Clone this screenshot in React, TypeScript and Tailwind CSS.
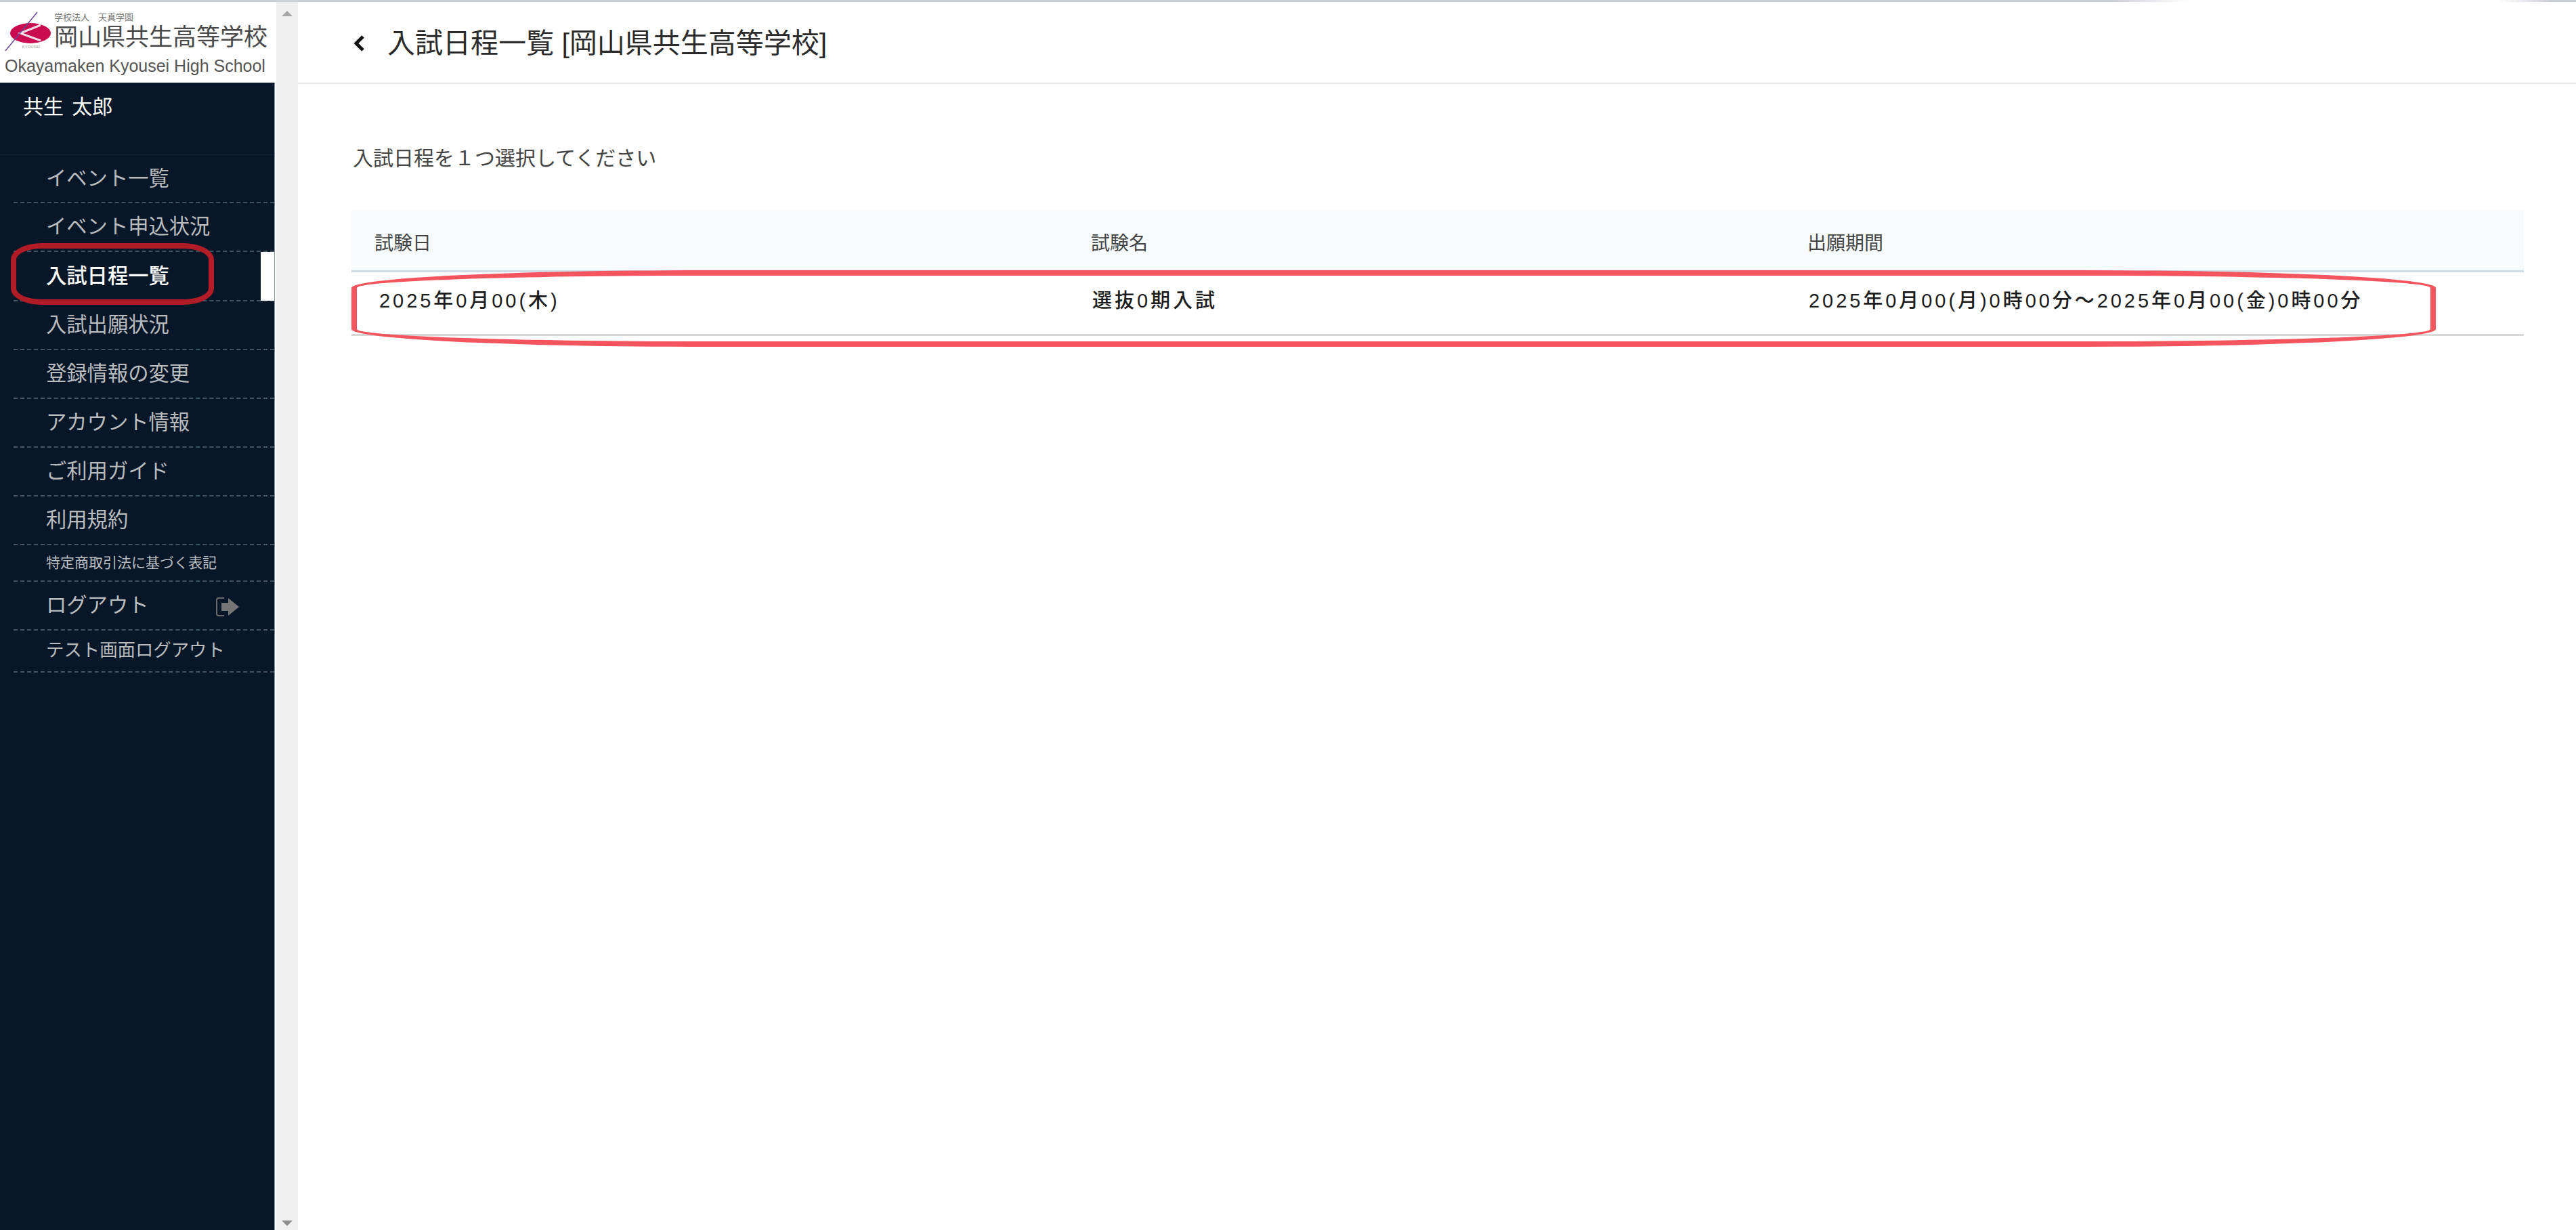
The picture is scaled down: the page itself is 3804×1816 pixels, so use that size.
const font = "font-['Liberation_Sans','Noto_Sans_CJK_JP',sans-serif]";

const menuItems = [
  { label: 'イベント一覧', h: 'h-[71px]' },
  { label: 'イベント申込状況', h: 'h-[72px]' },
  { label: '入試日程一覧', h: 'h-[73px]', active: true },
  { label: '入試出願状況', h: 'h-[72px]' },
  { label: '登録情報の変更', h: 'h-[72px]' },
  { label: 'アカウント情報', h: 'h-[72px]' },
  { label: 'ご利用ガイド', h: 'h-[72px]' },
  { label: '利用規約', h: 'h-[72px]' },
  { label: '特定商取引法に基づく表記', h: 'h-[54px]', small: true },
  { label: 'ログアウト', h: 'h-[72px]', icon: true },
  { label: 'テスト画面ログアウト', h: 'h-[62px]', mid: true },
];

function Logo() {
  return (
    <div className="h-[119px] bg-white pl-[7px] pt-[13px] text-[#4a4a4a]">
      <div className="flex h-[66px]">
        <svg width="72" height="66" viewBox="0 0 72 66" className="shrink-0">
          <ellipse cx="38" cy="33" rx="30" ry="15" fill="#cb0b50" />
          <path d="M53 21 L23 33 L53 44" fill="none" stroke="#f4dbe4" strokeWidth="3" />
          <line x1="1" y1="59" x2="48" y2="2" stroke="#6a4a98" strokeWidth="1.5" />
          <text x="39" y="55" fontSize="6" textAnchor="middle" fill="#9aa59a">KYOUSEI</text>
        </svg>
        <div className="ml-[1px]">
          <p className="text-[13px] leading-[20px] text-[#777]">学校法人　天真学園</p>
          <p className="mt-[-1px] text-[35px] leading-[40px] whitespace-nowrap">岡山県共生高等学校</p>
        </div>
      </div>
      <p className="text-[25px] leading-[30px] whitespace-nowrap text-[#555]">Okayamaken Kyousei High School</p>
    </div>
  );
}

function LogoutIcon() {
  return (
    <svg width="36" height="30" viewBox="0 0 36 30" className="absolute left-[318px] top-[22px]">
      <path d="M13 2 H5 Q2 2 2 5 V25 Q2 28 5 28 H13" fill="none" stroke="#6b6b6b" strokeWidth="2" />
      <path d="M9 9 H19 V2 L35 15 L19 28 V21 H9 Z" fill="#757575" />
    </svg>
  );
}

function Sidebar() {
  return (
    <aside className="flex w-[406px] shrink-0 flex-col">
      <Logo />
      <div className="flex-1 border-r border-[#8594a3] bg-[#071728]">
        <div className="h-[107px] border-b border-[#10263a] pl-[34px] pt-[16px] text-[30px] leading-[40px] text-white [word-spacing:4px]">
          共生 太郎
        </div>
        <nav className="relative">
          {menuItems.map((item) => (
            <div key={item.label} className={`relative ${item.h}`}>
              <div className="absolute inset-x-0 bottom-0 left-[20px] border-b-2 border-dashed border-[#3d5461]" />
              <a
                className={`flex h-full items-center pl-[68px] pb-[2px] ${
                  item.small ? 'text-[21px]' : item.mid ? 'text-[26.4px]' : 'text-[30.3px]'
                } ${item.active ? 'font-medium text-white' : 'text-[#b9bcbf]'}`}
              >
                {item.label}
              </a>
              {item.active && <div className="absolute right-0 top-0 h-[72px] w-[20px] bg-white" />}
              {item.icon && <LogoutIcon />}
            </div>
          ))}
          <div className="absolute left-[16px] top-[130px] h-[91px] w-[300px] rounded-[46px/24px] border-[8px] border-[#b11c27]" />
        </nav>
      </div>
    </aside>
  );
}

function Scrollbar() {
  return (
    <div className="ml-[2px] flex w-[32px] shrink-0 flex-col items-center justify-between bg-[#f0f0f0] pb-[6px] pt-[13px]">
      <div className="h-0 w-0 border-x-[8px] border-b-[8px] border-x-transparent border-b-[#a6a6a6]" />
      <div className="h-0 w-0 border-x-[8px] border-t-[8px] border-x-transparent border-t-[#8c8c8c]" />
    </div>
  );
}

function ScheduleTable() {
  return (
    <div className="relative mt-[56px] w-[3208px]">
      <div className="flex h-[92px] items-center border-b-[3px] border-[#cfdbe6] bg-[#f7fbfe] pt-[11px] text-[28px] text-[#444]">
        <div className="w-[1092px] pl-[34px]">試験日</div>
        <div className="w-[1058px]">試験名</div>
        <div>出願期間</div>
      </div>
      <div className="flex h-[94px] items-center border-b-[3px] border-[#d8d8d8] pb-[6px] text-[29px] font-medium tracking-[3.95px] text-[#1c1c1c]">
        <div className="w-[1094px] pl-[41px]">2025年0月00(木)</div>
        <div className="w-[1058px]">選抜0期入試</div>
        <div>2025年0月00(月)0時00分～2025年0月00(金)0時00分</div>
      </div>
      <div className="absolute left-0 top-[89px] h-[113px] w-[3078px] rounded-[520px/26px] border-[8px] border-[#f4545e]" />
    </div>
  );
}

export default function App() {
  return (
    <div className={`flex h-screen w-screen flex-col overflow-hidden bg-white ${font}`}>
      <div className="h-[3px] shrink-0 bg-[linear-gradient(to_right,#ced0d8_0%,#ced0d8_82%,#ffffff_85%,#ffffff_97%,#ced0d8_99%)]" />
      <div className="flex min-h-0 flex-1">
        <Sidebar />
        <Scrollbar />
        <main className="min-w-0 flex-1">
          <header className="flex h-[121px] items-center border-b-[2px] border-[#e6e6e6] pl-[81px] pt-[3px]">
            <svg width="20" height="26" viewBox="0 0 20 26" className="shrink-0">
              <path d="M15 3 L5 13 L15 23" fill="none" stroke="#111" strokeWidth="5" />
            </svg>
            <h1 className="ml-[31px] text-[41px] leading-none text-[#2b2b2b]">
              入試日程一覧 [岡山県共生高等学校]
            </h1>
          </header>
          <div className="pl-[79px]">
            <p className="ml-[2px] mt-[90px] text-[30px] leading-[40px] text-[#444]">入試日程を１つ選択してください</p>
            <ScheduleTable />
          </div>
        </main>
      </div>
    </div>
  );
}
